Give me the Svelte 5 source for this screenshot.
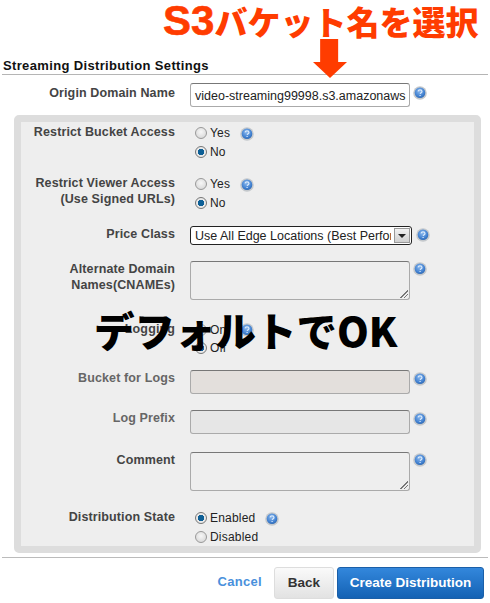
<script>
  let title = "バケット名を選択";
</script>

{#snippet help()}
  <svg class="help" width="14" height="14" viewBox="0 0 14 14">
    <defs>
      <radialGradient id="hb" cx="45%" cy="35%" r="70%">
        <stop offset="0%" stop-color="#8ab8ee" />
        <stop offset="70%" stop-color="#3f7fcf" />
        <stop offset="100%" stop-color="#2c62a8" />
      </radialGradient>
    </defs>
    <circle cx="7" cy="7" r="6.8" fill="#c4c8cc" />
    <circle cx="7" cy="6.8" r="5.3" fill="url(#hb)" />
    <path d="M5 5.3c.3-1.1 1.1-1.4 2-1.4 1.2 0 2 .6 2 1.5 0 1.2-1.6 1.3-1.8 2.4M7.1 9v1" fill="none" stroke="#dcebfb" stroke-width="1.2" />
  </svg>
{/snippet}

{#snippet radio(label, checked)}
  <div class="radio">
    <span class="dot" class:checked></span>
    <span>{label}</span>
  </div>
{/snippet}

<div class="page">
  <div class="title"><span class="s3">S3</span>{title}</div>
  <div class="arrow"></div>

  <h3>Streaming Distribution Settings</h3>

  <div class="row origin">
    <div class="label">Origin Domain Name</div>
    <div class="field">
      <div class="input value">video-streaming99998.s3.amazonaws</div>
    </div>
    {@render help()}
  </div>

  <div class="panel">
    <div class="row r-bucket">
      <div class="label">Restrict Bucket Access</div>
      <div class="radios">
        <div class="radio-line">{@render radio("Yes", false)}{@render help()}</div>
        {@render radio("No", true)}
      </div>
    </div>

    <div class="row r-viewer">
      <div class="label">Restrict Viewer Access<br />(Use Signed URLs)</div>
      <div class="radios">
        <div class="radio-line">{@render radio("Yes", false)}{@render help()}</div>
        {@render radio("No", true)}
      </div>
    </div>

    <div class="row r-price">
      <div class="label">Price Class</div>
      <div class="select">
        <span class="sel-text">Use All Edge Locations (Best Perfor</span>
        <span class="sel-btn"></span>
      </div>
      {@render help()}
    </div>

    <div class="row r-cname">
      <div class="label">Alternate Domain<br />Names(CNAMEs)</div>
      <div class="field"><div class="input area"><span class="grip"></span></div></div>
      {@render help()}
    </div>

    <div class="row r-logging">
      <div class="label">Logging</div>
      <div class="radios">
        <div class="radio-line">{@render radio("On", false)}{@render help()}</div>
        {@render radio("Off", true)}
      </div>
    </div>

    <div class="row r-logs">
      <div class="label dim">Bucket for Logs</div>
      <div class="field"><div class="input disabled warm"></div></div>
      {@render help()}
    </div>

    <div class="row r-prefix">
      <div class="label dim">Log Prefix</div>
      <div class="field"><div class="input disabled"></div></div>
      {@render help()}
    </div>

    <div class="row r-comment">
      <div class="label">Comment</div>
      <div class="field"><div class="input area"><span class="grip"></span></div></div>
      {@render help()}
    </div>

    <div class="row r-state">
      <div class="label">Distribution State</div>
      <div class="radios">
        <div class="radio-line">{@render radio("Enabled", true)}{@render help()}</div>
        {@render radio("Disabled", false)}
      </div>
    </div>
  </div>

  <div class="footer">
    <span class="cancel">Cancel</span>
    <button class="btn back">Back</button>
    <button class="btn create">Create Distribution</button>
  </div>

  <div class="overlay">デフォルトでOK</div>
</div>

<style>
  :global(body) {
    margin: 0;
    background: #fff;
  }
  .page {
    position: relative;
    width: 490px;
    height: 603px;
    overflow: hidden;
    font-family: "Liberation Sans", Arial, sans-serif;
    font-size: 12px;
    color: #222;
  }
  .title {
    height: 42px;
    padding: 0 0 0 163px;
    font-family: "Noto Sans CJK JP", sans-serif;
    font-size: 33px;
    font-weight: 900;
    line-height: 42px;
    white-space: nowrap;
    color: #ff3c00;
  }
  .s3 {
    font-family: "Liberation Sans", Arial, sans-serif;
    font-size: 42px;
    font-weight: 700;
    -webkit-text-stroke: 0.6px #ff3c00;
  }
  .arrow {
    position: absolute;
    left: 313px;
    top: 39px;
    width: 34px;
    height: 39px;
    background: #ff3c00;
    clip-path: polygon(21% 0, 74% 0, 74% 59%, 100% 59%, 50% 100%, 0 59%, 21% 59%);
  }
  h3 {
    margin: 16px 2px 0;
    height: 16px;
    padding-left: 1px;
    font-size: 13px;
    line-height: 16px;
    letter-spacing: 0.35px;
    font-weight: 700;
    color: #111;
    border-bottom: 1px solid #b5b5b5;
  }
  .row {
    display: flex;
    align-items: flex-start;
  }
  .label {
    width: 175px;
    margin-right: 15px;
    flex: none;
    text-align: right;
    font-size: 12.5px;
    font-weight: 700;
    line-height: 16px;
    letter-spacing: 0.12px;
    color: #444;
  }
  .dim {
    color: #666;
  }
  .panel .label {
    width: 154px;
  }
  .field {
    flex: none;
    width: 220px;
    margin-right: 3px;
  }
  .input {
    box-sizing: border-box;
    width: 100%;
    height: 24px;
    border: 1px solid #aaa;
    border-top-color: #777;
    border-radius: 3px;
    background: #fff;
  }
  .value {
    padding: 0 4px;
    font-size: 12.5px;
    line-height: 24px;
    white-space: nowrap;
    overflow: hidden;
    color: #222;
  }
  .area {
    position: relative;
    height: 39px;
    background: #eee;
  }
  .grip {
    position: absolute;
    right: 1px;
    bottom: 1px;
    width: 8px;
    height: 8px;
    background: linear-gradient(135deg, transparent 50%, #777 50%, #777 58%, transparent 58%, transparent 72%, #777 72%, #777 80%, transparent 80%);
  }
  .disabled {
    background: #e6e6e6;
  }
  .warm {
    background: #e3dfdc;
  }
  .origin {
    margin-top: 8px;
    height: 24px;
  }
  .origin .label {
    line-height: 20px;
  }
  .origin .help {
    margin-top: 3px;
  }
  .panel {
    margin: 8px 9px 0 14px;
    box-sizing: border-box;
    height: 438px;
    border: 7px solid #ddd;
    border-radius: 5px;
    background: #eee;
  }
  .radios {
    margin-left: 5px;
  }
  .radio-line {
    display: flex;
    align-items: center;
    gap: 10px;
  }
  .radio {
    display: flex;
    align-items: center;
    gap: 3px;
    min-width: 35px;
    height: 18px;
    margin-bottom: 1px;
    font-size: 12px;
    letter-spacing: 0.2px;
    color: #222;
  }
  .r-logging .radio {
    margin-bottom: 0;
  }
  .dot {
    box-sizing: border-box;
    display: inline-block;
    width: 12px;
    height: 12px;
    border: 1px solid #999;
    border-radius: 50%;
    background: radial-gradient(circle at 50% 40%, #f7f7f7, #d2d2d2);
  }
  .dot.checked {
    background: radial-gradient(circle, #0d5f96 0 3px, #e9e9e9 3.5px);
    border-color: #777;
  }
  .select {
    box-sizing: border-box;
    display: flex;
    align-items: center;
    width: 222px;
    height: 19px;
    margin-right: 4px;
    padding: 0 1px 0 4px;
    border: 1px solid #222;
    border-radius: 3px;
    background: #fff;
  }
  .sel-text {
    flex: 1;
    overflow: hidden;
    white-space: nowrap;
    font-size: 12.5px;
    color: #222;
  }
  .sel-btn {
    position: relative;
    flex: none;
    width: 16px;
    height: 15px;
    margin-left: 3px;
    background: linear-gradient(#f2f2f2, #cfcfcf);
    border: 1px solid #999;
    box-sizing: border-box;
  }
  .sel-btn::after {
    content: "";
    position: absolute;
    left: 3px;
    top: 5px;
    border: 4px solid transparent;
    border-top: 4px solid #222;
    border-bottom: 0;
  }
  .help {
    flex: none;
  }
  .r-cname > .help,
  .r-comment > .help {
    margin-top: 1px;
  }
  .r-price > .help,
  .r-logs > .help,
  .r-prefix > .help {
    margin-top: 2px;
  }
  .r-bucket { margin-top: 2px; }
  .r-viewer { margin-top: 13px; }
  .r-price { margin-top: 13px; }
  .r-cname { margin-top: 16px; }
  .r-logging { margin-top: 21px; }
  .r-logs { margin-top: 13px; }
  .r-prefix { margin-top: 16px; }
  .r-comment { margin-top: 18px; }
  .r-state { margin-top: 18px; }
  .footer {
    display: flex;
    align-items: center;
    justify-content: flex-end;
    height: 41px;
    margin: 4px 2px 0;
    padding: 0 4px 0 0;
    border-top: 1px solid #bbb;
  }
  .cancel {
    margin-top: 6px;
    margin-right: 12px;
    font-size: 13px;
    font-weight: 700;
    letter-spacing: 0.3px;
    color: #4a90dc;
  }
  .btn {
    box-sizing: border-box;
    height: 32px;
    margin-top: 8px;
    border-radius: 3px;
    font-family: inherit;
    font-size: 13.5px;
    font-weight: 700;
  }
  .back {
    width: 60px;
    margin-right: 3px;
    border: 1px solid #ddd;
    background: linear-gradient(#fafafa, #e2e2e2);
    color: #333;
  }
  .create {
    width: 147px;
    border: 1px solid #1a5fa8;
    background: linear-gradient(#3387dc, #1462b4);
    color: #fff;
  }
  .overlay {
    position: absolute;
    left: 94px;
    top: 305px;
    font-family: "Noto Sans CJK JP", sans-serif;
    font-size: 40.5px;
    font-weight: 900;
    line-height: 50px;
    white-space: nowrap;
    color: #000;
  }
</style>
